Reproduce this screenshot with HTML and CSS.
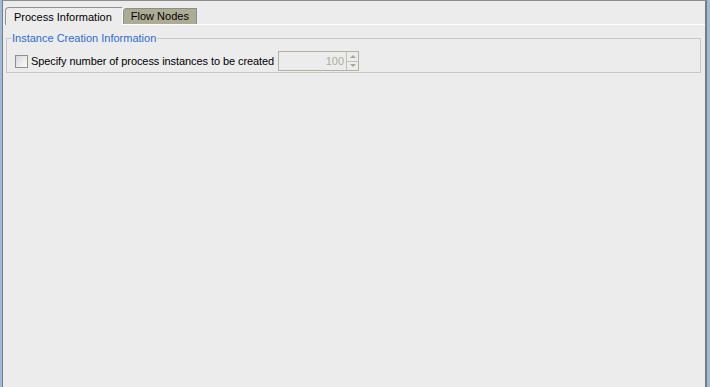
FILE: index.html
```html
<!DOCTYPE html>
<html lang="en">
<head>
    <meta charset="UTF-8">
    <title>Process Properties</title>
    <link rel="stylesheet" href="styles.css">
</head>
<body>
    <div class="screen">
        <div class="window">
            <div class="tabs">
                <div class="tab active">Process Information</div>
                <div class="tab">Flow Nodes</div>
            </div> <!-- tab strip -->
            <div class="panel">
                <fieldset class="group">
                    <legend>Instance Creation Information</legend>
                    <div class="row">
                        <span class="checkbox"></span>
                        <span class="label">Specify number of process instances to be created</span>
                        <div class="spinner">
                            <span class="value">100</span>
                            <div class="spin-buttons">
                                <span class="spin up"></span>
                                <span class="spin down"></span>
                            </div>
                        </div>
                    </div>
                </fieldset>
            </div>
        </div>
    </div>
</body>
</html>
```

FILE: styles.css
```css
body { margin: 0; padding: 0; background: #9db9de; font-family: 'Liberation Sans', Arial, sans-serif; font-size: 11px; color: #000; overflow: hidden; }
.screen { height: 387px; padding: 0 3px 0 2px; }
.window { height: 387px; box-sizing: border-box; background: #ececec; border-top: 1px solid #8c8c8c; border-left: 1px solid #7c7c7c; border-right: 2px solid #7c7c7c; display: flex; flex-direction: column; }

.tabs { display: flex; align-items: flex-end; height: 23px; padding-left: 2px; border-bottom: 1px solid #ffffff; }
.tab { height: 15px; line-height: 15px; padding: 0 7px 0 7px; background: #aeab95; border: 1px solid #8d8d8d; border-bottom: none; border-top-left-radius: 4px; }
.tab.active { height: 17px; line-height: 19px; padding: 0 10px 0 8px; margin: 0 0 -1px 0; background: #ececec; border-color: #929292; border-right-color: #ffffff; position: relative; }

.panel { flex: 1; padding: 7px 4px 0 3px; }
.group { margin: 0; padding: 7px 8px 1px 4px; border: 1px solid #c8c8c8; }
.group legend { padding: 0 1px; margin-left: 0; color: #2c6bd4; font-size: 11px; }

.row { display: flex; align-items: center; height: 20px; padding-left: 4px; }
.checkbox { width: 11px; height: 11px; border: 1px solid #8f8f8f; background: linear-gradient(135deg, #d9d9d9, #fbfbfb); margin-right: 3px; }
.label { margin-right: 4px; letter-spacing: -0.08px; }
.spinner { display: flex; width: 81px; height: 20px; box-sizing: border-box; border: 1px solid #b3b19f; }
.spinner .value { flex: 1; text-align: right; line-height: 18px; padding-right: 2px; color: #aeac9a; }
.spin-buttons { width: 11px; border-left: 1px solid #c3c1b1; display: flex; flex-direction: column; }
.spin { flex: 1; display: flex; align-items: center; justify-content: center; }
.spin.up { border-bottom: 1px solid #c3c1b1; }
.spin.up::before { content: ""; border: 3px solid transparent; border-bottom: 3px solid #a8a694; border-top: none; }
.spin.down::before { content: ""; border: 3px solid transparent; border-top: 3px solid #a8a694; border-bottom: none; }
```
